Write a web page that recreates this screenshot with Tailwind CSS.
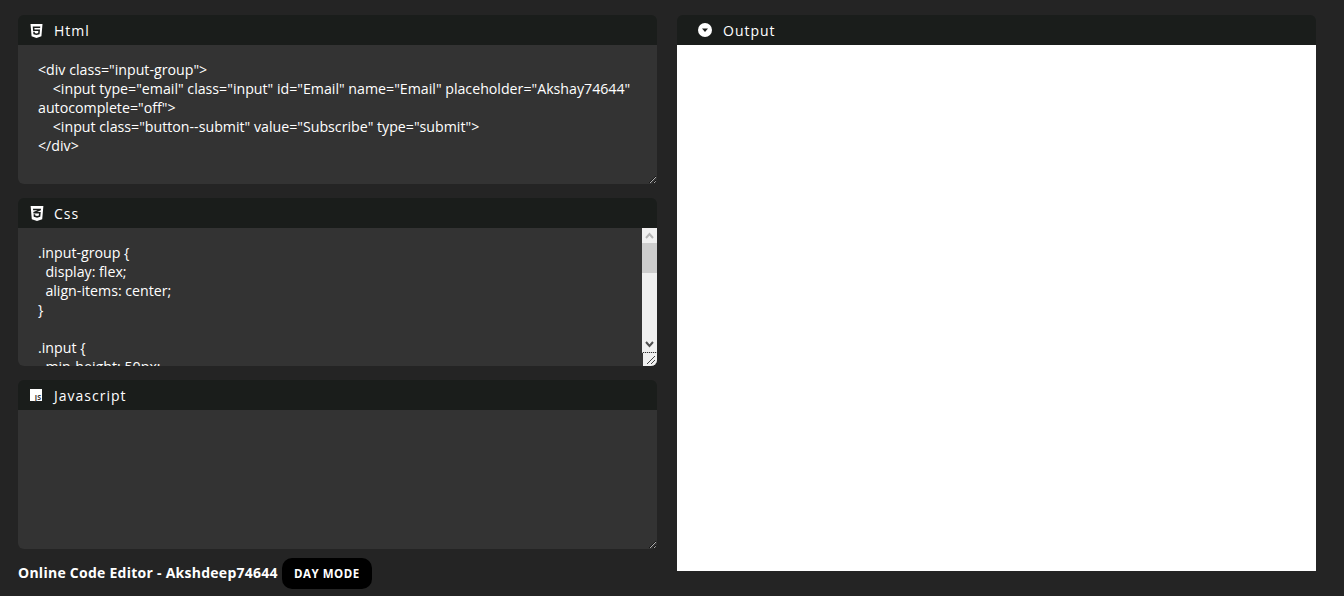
<!DOCTYPE html>
<html lang="en">
<head>
  <meta charset="UTF-8" />
  <title>Online Code Editor</title>
  <script src="https://cdn.jsdelivr.net/npm/@tailwindcss/browser@4"></script>
</head>
<body class="bg-[#242424] text-white font-['Open_Sans',sans-serif] h-[596px] overflow-hidden">
  <div class="flex gap-5 pl-[18px] pt-[15px]">
    <!-- editors -->
    <div class="w-[639px] flex flex-col">
      <div class="h-[169px] flex flex-col rounded-md overflow-hidden mb-[14px]">
        <div class="h-[30px] shrink-0 bg-[#1a1d1b] flex items-center pl-3 gap-[11px]">
          <svg class="w-[13px] h-[16px] mt-px" viewBox="0 0 384 512" fill="#fff"><path d="M0 32l34.9 395.8L191.5 480l157.6-52.2L384 32H0zm308.2 127.9H124.4l4.1 49.4h175.6l-13.6 148.4-97.9 27v.3h-1.1l-98.7-27.3-6-75.8h47.7L138 320l53.5 14.5 53.7-14.5 6-62.2H84.3L71.5 112.2h241.1l-4.4 47.7z"/></svg>
          <span class="text-[14px] font-medium tracking-[1px] pt-px">Html</span>
        </div>
        <textarea readonly class="flex-1 bg-[#333333] text-white text-[14.2px] leading-[19px] pt-[15px] px-5 resize-y outline-none">&lt;div class="input-group"&gt;
    &lt;input type="email" class="input" id="Email" name="Email" placeholder="Akshay74644" autocomplete="off"&gt;
    &lt;input class="button--submit" value="Subscribe" type="submit"&gt;
&lt;/div&gt;</textarea>
      </div>
      <div class="h-[168px] flex flex-col rounded-md overflow-hidden mb-[14px]">
        <div class="h-[30px] shrink-0 bg-[#1a1d1b] flex items-center pl-3 gap-[10px]">
          <svg class="w-[14px] h-[17px]" viewBox="0 0 384 512" fill="#fff"><path d="M0 32l34.9 395.8L192 480l157.1-52.2L384 32H0zm313.1 80l-4.8 47.3L193 208.6l-.3.1h111.5l-12.8 146.6-98.2 28.7-98.8-29.2-6.4-73.9h48.9l3.2 38.3 52.6 13.3 54.7-15.4 3.7-61.6-166.3-.5v-.1l-.2.1-3.6-46.3L193.1 162l6.5-2.7H76.7L70.9 112h242.2z"/></svg>
          <span class="text-[14px] font-medium tracking-[1px]">Css</span>
        </div>
        <div class="relative flex-1 flex min-h-0">
          <textarea readonly class="flex-1 bg-[#333333] text-white text-[14.2px] leading-[19px] pt-[15px] px-5 resize-none outline-none overflow-hidden">.input-group {
  display: flex;
  align-items: center;
}

.input {
  min-height: 50px;
  max-width: 150px;
  padding: 0 1rem;
  color: #fff;
}</textarea>
          <!-- scrollbar and resize corner -->
          <div class="absolute right-0 top-0 bottom-0 w-[15px] bg-[#f0f0f0] flex flex-col">
            <div class="h-[15px] flex items-center justify-center">
              <svg class="w-[9px] h-[7px]" viewBox="0 0 9 7" fill="none" stroke="#b5b5b5" stroke-width="2"><path d="M1 6l3.5-4L8 6"/></svg>
            </div>
            <div class="h-[30px] bg-[#cdcdcd]"></div>
            <div class="flex-1"></div>
            <div class="h-[15px] flex items-center justify-center">
              <svg class="w-[9px] h-[7px]" viewBox="0 0 9 7" fill="none" stroke="#505050" stroke-width="2"><path d="M1 1l3.5 4L8 1"/></svg>
            </div>
            <div class="h-[14px] border-t border-dotted border-[#c8c8c8] pl-px bg-[#333333]">
              <div class="h-full bg-[#f0f0f0] flex items-end justify-end pr-[2px] pb-[2px]">
                <svg class="w-[8px] h-[8px]" viewBox="0 0 8 8" fill="none" stroke="#444" stroke-width="1"><path d="M0 8L8 0M4 8l4-4"/></svg>
              </div>
            </div>
          </div>
        </div>
      </div>
      <div class="h-[169px] flex flex-col rounded-md overflow-hidden">
        <div class="h-[30px] shrink-0 bg-[#1a1d1b] flex items-center pl-3 gap-3">
          <div class="w-3 h-3 bg-white flex items-end justify-end pr-px text-[7px] leading-[7px] font-bold text-[#333]">JS</div>
          <span class="text-[14px] font-medium tracking-[1px] pt-px">Javascript</span>
        </div>
        <textarea readonly class="flex-1 bg-[#333333] text-white text-[14.2px] leading-[19px] pt-[15px] px-5 resize-y outline-none"></textarea>
      </div>
      <div class="flex items-center gap-1 mt-[9px]">
        <span class="text-[14px] font-bold tracking-[0.26px] pb-[2px]">Online Code Editor - Akshdeep74644</span>
        <button class="bg-black text-white text-[11.5px] font-bold tracking-[0.5px] h-[31px] w-[90px] rounded-[10px]">DAY MODE</button>
      </div>
    </div>
    <!-- preview -->
    <div class="w-[639px] h-[556px] flex flex-col rounded-t-md overflow-hidden">
      <div class="h-[30px] shrink-0 bg-[#1a1d1b] flex items-center pl-[21px] gap-[11px]">
        <svg class="w-[14px] h-[14px]" viewBox="0 0 14 14"><circle cx="7" cy="7" r="7" fill="#fff"/><path d="M4 5.6h6L7 9z" fill="#1a1d1b"/></svg>
        <span class="text-[14px] font-medium tracking-[1px] pt-px">Output</span>
      </div>
      <div class="flex-1 bg-white"></div>
    </div>
  </div>
</body>
</html>
